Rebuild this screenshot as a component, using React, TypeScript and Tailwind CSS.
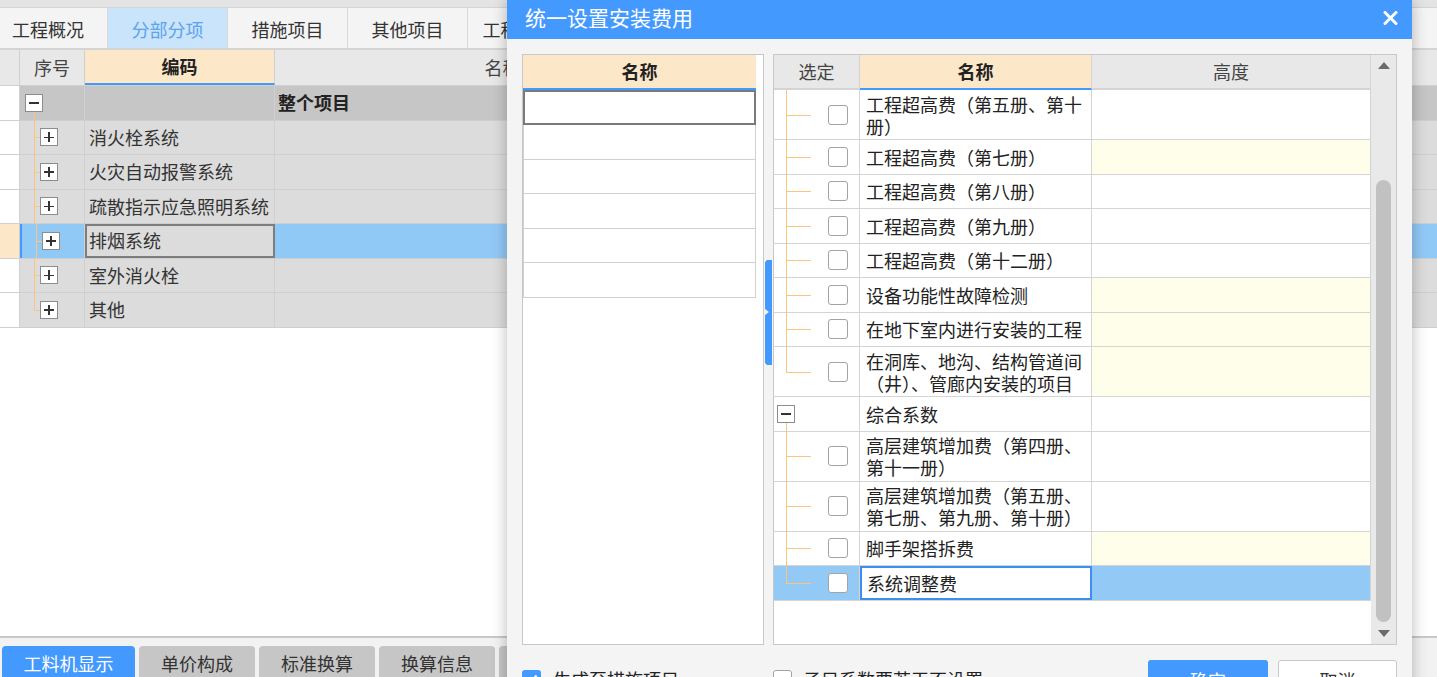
import React from "react";

const topTabs = [
  { label: "工程概况", w: "w-[108px] justify-start pl-[12px]" },
  { label: "分部分项", w: "w-[120px] justify-center", active: true },
  { label: "措施项目", w: "w-[120px] justify-center" },
  { label: "其他项目", w: "w-[120px] justify-center" },
  { label: "工程量汇总", w: "w-[120px] justify-center" },
];

const bottomTabs = [
  { label: "工料机显示", w: "w-[133px]", active: true },
  { label: "单价构成", w: "w-[116px]" },
  { label: "标准换算", w: "w-[116px]" },
  { label: "换算信息", w: "w-[116px]" },
  { label: "特征及内容", w: "w-[116px]" },
];

const gridRows = [
  { code: "消火栓系统" },
  { code: "火灾自动报警系统" },
  { code: "疏散指示应急照明系统" },
  { code: "排烟系统", selected: true },
  { code: "室外消火栓" },
  { code: "其他", last: true },
];

type FeeRow = {
  name: string;
  tall?: boolean;
  yellow?: boolean;
  last?: boolean;
  group?: boolean;
  selected?: boolean;
};

const feeRows: FeeRow[] = [
  { name: "工程超高费（第五册、第十册）", tall: true },
  { name: "工程超高费（第七册）", yellow: true },
  { name: "工程超高费（第八册）" },
  { name: "工程超高费（第九册）" },
  { name: "工程超高费（第十二册）" },
  { name: "设备功能性故障检测", yellow: true },
  { name: "在地下室内进行安装的工程", yellow: true },
  { name: "在洞库、地沟、结构管道间（井）、管廊内安装的项目", tall: true, yellow: true, last: true },
  { name: "综合系数", group: true },
  { name: "高层建筑增加费（第四册、第十一册）", tall: true },
  { name: "高层建筑增加费（第五册、第七册、第九册、第十册）", tall: true },
  { name: "脚手架搭拆费", yellow: true },
  { name: "系统调整费", selected: true, last: true },
];

const TreeBox = ({ minus }: { minus?: boolean }) => (
  <div className="relative w-[18px] h-[18px] border border-[#8c8c8c] bg-white flex items-center justify-center">
    <div className="absolute w-[10px] h-[1.5px] bg-[#333]" />
    {!minus && <div className="absolute w-[1.5px] h-[10px] bg-[#333]" />}
  </div>
);

const Checkbox = () => (
  <div className="w-[20px] h-[20px] rounded-[3px] border border-[#a3a3a3] bg-white" />
);

const Background = () => (
  <div className="flex flex-col h-full">
    <div className="h-[8px] bg-[#e4e4e4] border-b border-[#d4d4d4]" />
    {/* Top tabs */}
    <div className="flex h-[42px] bg-[#f4f4f4] border-b-2 border-[#d4d4d4]">
      {topTabs.map((t) => (
        <div
          key={t.label}
          className={`${t.w} flex items-center pt-[2px] text-[18px] border-r border-[#d8d8d8] ${
            t.active ? "bg-[#c9e4fb] text-[#5ba3ec]" : "text-[#333]"
          }`}
        >
          {t.label}
        </div>
      ))}
      <div className="flex-1" />
    </div>

    {/* Grid header */}
    <div className="flex h-[36px] bg-[#e8e8e8] border-b border-[#d0d0d0] text-[18px]">
      <div className="w-[20px] border-r border-[#d0d0d0]" />
      <div className="w-[65px] border-r border-[#d0d0d0] flex items-center justify-center text-[#444]">序号</div>
      <div className="w-[190px] bg-[#fde7c9] border-r border-[#d0d0d0] border-b-2 border-b-[#4499ff] flex items-center justify-center font-bold text-[#222]">编码</div>
      <div className="w-[456px] border-r border-[#d0d0d0] flex items-center justify-center text-[#444]">名称</div>
      <div className="flex-1" />
    </div>

    {/* Root row */}
    <div className="flex h-[34.5px] border-b border-[#cfcfcf] text-[18px]">
      <div className="w-[20px] bg-white border-r border-[#d0d0d0]" />
      <div className="relative w-[65px] bg-[#c6c6c6] border-r border-[#d0d0d0] flex items-center pl-[5px]">
        <TreeBox minus />
        <div className="absolute left-[14px] top-[26px] bottom-[-1px] w-px bg-[#fbc57d]" />
      </div>
      <div className="w-[190px] bg-[#c6c6c6] border-r border-[#d0d0d0]" />
      <div className="w-[456px] bg-[#c6c6c6] border-r border-[#d0d0d0] flex items-center pl-[3px] font-bold text-[#222]">整个项目</div>
      <div className="flex-1 bg-[#c6c6c6]" />
    </div>

    {gridRows.map((r) => (
      <div key={r.code} className="flex h-[34.5px] border-b border-[#cfcfcf] text-[18px] text-[#333]">
        <div className={`w-[20px] border-r border-[#d0d0d0] ${r.selected ? "bg-[#fde7c9]" : "bg-white"}`} />
        <div
          className={`relative w-[65px] border-r border-[#d0d0d0] flex items-center pl-[20px] ${
            r.selected ? "bg-[#91c9f6] border-l-2 border-l-[#4499ff] pl-[18px]" : "bg-[#dcdcdc]"
          }`}
        >
          <div className={`absolute left-[14px] top-0 w-px bg-[#fbc57d] ${r.last ? "h-1/2" : "bottom-[-1px]"}`} />
          <div className="absolute left-[14px] top-1/2 w-[6px] h-px bg-[#fbc57d]" />
          <TreeBox />
        </div>
        <div
          className={`w-[190px] flex items-center bg-[#dcdcdc] ${
            r.selected ? "border-2 border-[#7d7d7d] pl-[2px]" : "border-r border-[#d0d0d0] pl-[4px]"
          }`}
        >
          {r.code}
        </div>
        <div className={`w-[456px] border-r border-[#d0d0d0] ${r.selected ? "bg-[#91c9f6]" : "bg-[#dcdcdc]"}`} />
        <div className={`flex-1 ${r.selected ? "bg-[#91c9f6]" : "bg-[#dcdcdc]"}`} />
      </div>
    ))}

    <div className="flex-1 bg-white" />

    {/* Bottom tabs */}
    <div className="h-[41px] border-t-2 border-[#c8c8c8] bg-[#f2f2f2] flex items-end gap-[4px] pl-[2px]">
      {bottomTabs.map((t) => (
        <div
          key={t.label}
          className={`${t.w} h-[31px] rounded-t-[4px] flex items-center justify-center text-[18px] pt-[4px] ${
            t.active ? "bg-[#4499ff] text-white" : "bg-[#c6c6c6] text-[#333]"
          }`}
        >
          {t.label}
        </div>
      ))}
    </div>
  </div>
);

const FeeTableRow = ({ row }: { row: FeeRow }) => {
  const h = row.tall ? "h-[50px]" : "h-[34.5px]";
  return (
    <div className={`flex ${h} border-b border-[#d4d4d4]`}>
      <div className={`relative w-[86px] border-r border-[#d4d4d4] ${row.selected ? "bg-[#93c9f5]" : "bg-white"}`}>
        {row.group ? (
          <>
            <div className="absolute left-[3px] top-1/2 -translate-y-1/2">
              <TreeBox minus />
            </div>
            <div className="absolute left-[12px] top-[calc(50%+9px)] bottom-[-1px] w-px bg-[#fbc57d] z-10" />
          </>
        ) : (
          <>
            <div className={`absolute left-[12px] top-0 w-px bg-[#fbc57d] z-10 ${row.last ? "h-1/2" : "bottom-[-1px]"}`} />
            <div className="absolute left-[12px] top-1/2 w-[25px] h-px bg-[#fbc57d]" />
            <div className="absolute left-[54px] top-1/2 -translate-y-1/2">
              <Checkbox />
            </div>
          </>
        )}
      </div>
      <div
        className={`w-[232px] flex items-center text-[18px] leading-[22px] text-[#222] ${
          row.selected ? "border-2 border-[#3d8ef0] bg-white pl-[5px] pr-[1px]" : "border-r border-[#d4d4d4] pl-[6px] pr-[2px]"
        }`}
      >
        <span>{row.name}</span>
      </div>
      <div
        className={`w-[279px] border-r border-[#d4d4d4] ${
          row.selected ? "bg-[#93c9f5]" : row.yellow ? "bg-[#fffeea]" : "bg-white"
        }`}
      />
    </div>
  );
};

const Dialog = () => (
  <div className="absolute left-[507px] top-0 w-[905px] h-[720px] bg-[#f4f4f4] shadow-[0_0_14px_rgba(0,0,0,0.28)] flex flex-col">
    {/* Title bar */}
    <div className="h-[39px] bg-[#4499ff] flex items-center justify-between pl-[18px] pr-[14px] pb-[3px]">
      <span className="text-[21px] text-white">统一设置安装费用</span>
      <svg width="15" height="14" viewBox="0 0 15 14">
        <path d="M2 1.5 L13 12.5 M13 1.5 L2 12.5" stroke="#fff" strokeWidth="3" strokeLinecap="round" />
      </svg>
    </div>

    <div className="px-[15px] pt-[15px] flex flex-col">
      <div className="flex h-[591px]">
        {/* Left panel */}
        <div className="w-[242px] border border-[#c8c8c8] bg-white flex flex-col">
          <div className="w-[233px] h-[35px] bg-[#fde7c9] border-b-2 border-[#4499ff] flex items-center justify-center text-[18px] font-bold text-[#222]">
            名称
          </div>
          <div className="w-[233px] h-[35px] border-2 border-[#7a7a7a] bg-white" />
          {[0, 1, 2, 3, 4].map((i) => (
            <div key={i} className="w-[233px] h-[34.5px] border-b border-r border-l border-[#d0d0d0] bg-white" />
          ))}
        </div>

        {/* Splitter */}
        <div className="w-[9px] flex flex-col items-center pt-[206px]">
          <svg width="7" height="105" viewBox="0 0 7 105">
            <path d="M0 2 L2 0 L7 0 L7 105 L2 105 L0 103 L0 55 L4 52 L0 49 Z" fill="#4499ff" />
          </svg>
        </div>

        {/* Right panel */}
        <div className="w-[624px] border border-[#c8c8c8] bg-white flex">
          <div className="w-[597px] flex flex-col">
            <div className="flex h-[35px] text-[18px]">
              <div className="w-[86px] bg-[#e8e8e8] border-r border-b-2 border-[#d4d4d4] flex items-center justify-center text-[#444]">选定</div>
              <div className="w-[232px] bg-[#fde7c9] border-r border-[#d4d4d4] border-b-2 border-b-[#4499ff] flex items-center justify-center font-bold text-[#222]">名称</div>
              <div className="w-[279px] bg-[#e8e8e8] border-r border-b-2 border-[#d4d4d4] flex items-center justify-center text-[#444]">高度</div>
            </div>
            {feeRows.map((r) => (
              <FeeTableRow key={r.name} row={r} />
            ))}
          </div>
          {/* Scrollbar */}
          <div className="w-[25px] bg-[#e9e9e9] flex flex-col items-center">
            <div className="h-[20px] flex items-center">
              <svg width="12" height="7" viewBox="0 0 12 7">
                <path d="M0 7 L6 0 L12 7 Z" fill="#6a6a6a" />
              </svg>
            </div>
            <div className="h-[105px]" />
            <div className="w-[15px] h-[442px] rounded-full bg-[#c1c1c1]" />
            <div className="flex-1" />
            <div className="h-[22px] flex items-center">
              <svg width="12" height="7" viewBox="0 0 12 7">
                <path d="M0 0 L12 0 L6 7 Z" fill="#6a6a6a" />
              </svg>
            </div>
          </div>
        </div>
      </div>

      {/* Footer */}
      <div className="flex items-start pt-[15px] text-[18px] text-[#222]">
        <div className="w-[251px] flex items-center gap-[12px] mt-[8px]">
          <div className="w-[19px] h-[19px] rounded-[3px] bg-[#4499ff] flex items-center justify-center">
            <svg width="13" height="11" viewBox="0 0 13 11">
              <path d="M1.5 5.5 L5 9 L11.5 1.5" stroke="#fff" strokeWidth="2.2" fill="none" />
            </svg>
          </div>
          <span className="leading-[22px]">生成至措施项目</span>
        </div>
        <div className="flex items-center gap-[11px] mt-[8px]">
          <div className="w-[19px] h-[19px] rounded-[3px] border border-[#a3a3a3] bg-white" />
          <span className="leading-[22px]">子目系数要若干不设置</span>
        </div>
        <div className="ml-auto flex gap-[10px]">
          <div className="w-[120px] h-[40px] rounded-[3px] bg-[#4499ff] text-white flex items-center justify-center">确定</div>
          <div className="w-[119px] h-[40px] rounded-[3px] border border-[#c8c8c8] bg-white text-[#333] flex items-center justify-center">取消</div>
        </div>
      </div>
    </div>
  </div>
);

export default function App() {
  return (
    <div className="relative w-[1437px] h-[677px] overflow-hidden bg-white font-['Noto_Sans_CJK_SC',sans-serif] text-[#333]">
      <Background />
      <Dialog />
    </div>
  );
}
